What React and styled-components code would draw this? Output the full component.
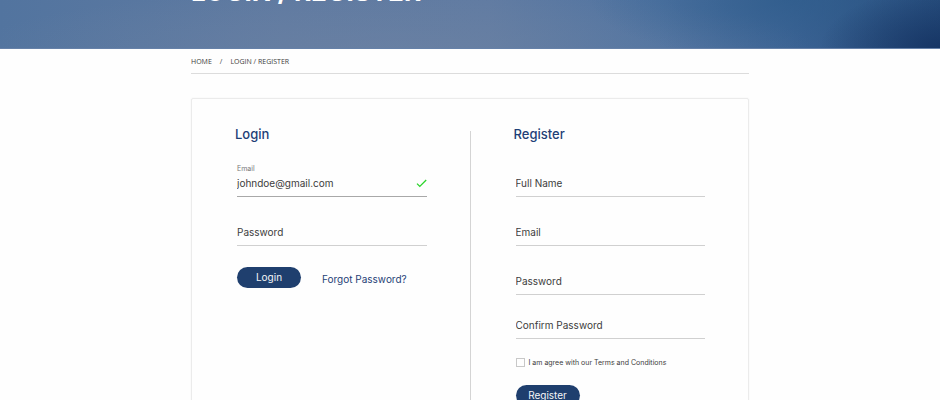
import React, { useState } from "react";
import styled, { createGlobalStyle } from "styled-components";

export default function App() {
  const [email, setEmail] = useState("johndoe@gmail.com");
  const [agree, setAgree] = useState(false);

  const handleSubmit = (e) => e.preventDefault();

  return (
    <>
      <GlobalStyle />
      <Hero>
        <Container>
          <h1>LOGIN / REGISTER</h1>
        </Container>
      </Hero>
      <Container>
        <Breadcrumb aria-label="Breadcrumb">
          <a href="#home">HOME</a>
          <span>/</span>
          <a href="#login">LOGIN / REGISTER</a>
        </Breadcrumb>
        <Card>
          <Column>
            <h2>Login</h2>
            <Form onSubmit={handleSubmit}>
              <Field $filled>
                <label htmlFor="login-email">Email</label>
                <div className="control">
                  <input
                    id="login-email"
                    type="email"
                    value={email}
                    onChange={(e) => setEmail(e.target.value)}
                  />
                  <Check />
                </div>
              </Field>
              <TextField type="password" name="Password" />
              <Actions>
                <Button type="submit">Login</Button>
                <a href="#forgot">Forgot Password?</a>
              </Actions>
            </Form>
          </Column>
          <Divider />
          <Column>
            <h2>Register</h2>
            <Form onSubmit={handleSubmit}>
              <TextField type="text" name="Full Name" />
              <TextField type="email" name="Email" />
              <TextField type="password" name="Password" tight />
              <TextField type="password" name="Confirm Password" />
              <Terms>
                <input
                  type="checkbox"
                  checked={agree}
                  onChange={(e) => setAgree(e.target.checked)}
                />
                <span>I am agree with our Terms and Conditions</span>
              </Terms>
              <Button type="submit">Register</Button>
            </Form>
          </Column>
        </Card>
      </Container>
    </>
  );
}

function TextField({ type, name, tight }) {
  return (
    <Field $tight={tight}>
      <div className="control">
        <input type={type} placeholder={name} aria-label={name} />
      </div>
    </Field>
  );
}

function Check() {
  return (
    <svg width="11" height="9" viewBox="0 0 11 9" fill="none" aria-hidden="true">
      <path d="M1 4.6 3.8 7.4 10.2 1" stroke="#2bd42b" strokeWidth="1.3" />
    </svg>
  );
}

const GlobalStyle = createGlobalStyle`
  * {
    box-sizing: border-box;
  }
  html {
    scrollbar-width: none;
  }
  body {
    margin: 0;
    background-color: #fefefe;
    color: #3c3c3c;
    font-family: Inter, sans-serif;
    font-size: 10px;
  }
  h1, h2 {
    margin: 0;
  }
  a {
    text-decoration: none;
    color: inherit;
  }
  input, button {
    font: inherit;
    color: inherit;
  }
`;

const Container = styled.div`
  width: 100%;
  max-width: 558px;
  margin: 0 auto;
`;

const Hero = styled.header`
  display: flex;
  align-items: flex-end;
  height: 49px;
  padding-bottom: 40px;
  overflow: hidden;
  border-bottom: 1px solid #6681a8;
  background:
    radial-gradient(ellipse 120px 60px at 100% 100%, rgba(18, 48, 95, 0.8) 0%, rgba(18, 48, 95, 0) 100%),
    radial-gradient(ellipse 200px 60px at 84% 0%, rgba(43, 91, 138, 0.6) 0%, rgba(43, 91, 138, 0) 100%),
    radial-gradient(ellipse 420px 60px at 42% 100%, rgba(110, 131, 163, 0.6) 0%, rgba(110, 131, 163, 0) 100%),
    linear-gradient(90deg, #52749f 0%, #5f7aa1 30%, #607ba2 52%, #4f73a1 70%, #3d6495 84%, #274c7c 100%);
  h1 {
    color: #fff;
    font-size: 26px;
    font-weight: 700;
    line-height: 32px;
    white-space: nowrap;
  }
`;

const Breadcrumb = styled.nav`
  display: flex;
  align-items: center;
  gap: 8px;
  height: 25px;
  border-bottom: 1px solid #dcdcdc;
  font-family: "Open Sans", sans-serif;
  font-size: 7px;
`;

const Card = styled.main`
  display: grid;
  grid-template-columns: 1fr 1px 1fr;
  margin-top: 24px;
  border: 1px solid #ebebeb;
  border-radius: 2px;
  box-shadow: 0 0 2px rgba(0, 0, 0, 0.06);
`;

const Divider = styled.div`
  margin: 32px 0;
  background-color: #d4d4d4;
`;

const Column = styled.section`
  padding: 26px 43px 32px;
  h2 {
    color: #1f3f77;
    font-size: 13px;
    font-weight: 500;
    line-height: 18px;
  }
`;

const Form = styled.form`
  margin-top: 19px;
  padding-left: 2px;
`;

const Field = styled.div`
  padding-top: ${({ $filled }) => ($filled ? "0" : "12px")};
  margin-bottom: ${({ $tight }) => ($tight ? "9px" : "14px")};
  label {
    display: block;
    height: 12px;
    color: #777;
    font-size: 7px;
    line-height: 14px;
  }
  .control {
    display: flex;
    align-items: center;
    padding-bottom: 4px;
    border-bottom: 1px solid ${({ $filled }) => ($filled ? "#a8a8a8" : "#d0d0d0")};
  }
  input {
    flex: 1;
    min-width: 0;
    height: 18px;
    padding: 0;
    border: none;
    outline: none;
    background: transparent;
    &::placeholder {
      color: #3c3c3c;
      opacity: 1;
    }
  }
`;

const Button = styled.button`
  width: 64px;
  height: 21px;
  padding: 0 0 2px;
  border: none;
  border-radius: 11px;
  background-color: #1f3f6e;
  color: #f4f6f8;
  cursor: pointer;
`;

const Actions = styled.div`
  display: flex;
  align-items: flex-end;
  gap: 21px;
  padding-top: 7px;
  a {
    color: #1f3f77;
    line-height: 18px;
  }
`;

const Terms = styled.label`
  display: flex;
  align-items: center;
  gap: 4px;
  height: 12px;
  margin: 17px 0;
  font-size: 7px;
  white-space: nowrap;
  input {
    appearance: none;
    width: 9px;
    height: 9px;
    margin: 0;
    border: 1px solid #c8c8c8;
    &:checked {
      background-color: #1f3f6e;
    }
  }
`;
